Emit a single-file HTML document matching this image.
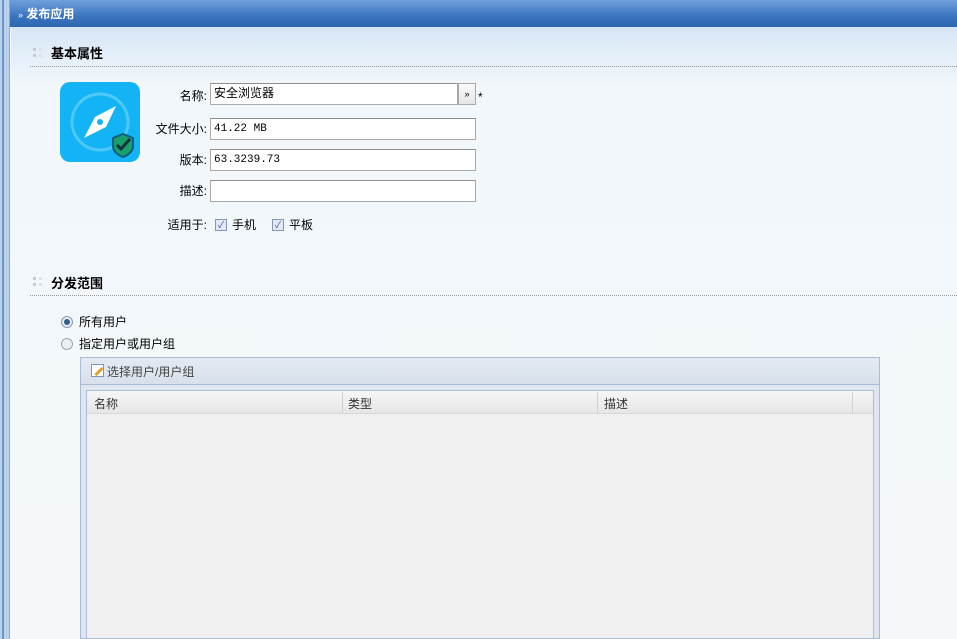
<!DOCTYPE html>
<html><head><meta charset="utf-8"><style>
*{margin:0;padding:0;box-sizing:border-box}
body{width:957px;height:639px;overflow:hidden;position:relative;font-family:"Liberation Sans","Noto Sans CJK SC",sans-serif;font-size:12px;line-height:14px;color:#000;background:#f4f8fb}
.abs{position:absolute}
.left{left:0;top:0;width:10px;height:639px;background:#b9d0ec;border-right:1px solid #8aa9d3}
.left:before{content:"";position:absolute;left:2px;top:0;width:2px;height:639px;background:#6f95c8}
.hdr{left:10px;top:0;width:947px;height:27px;background:linear-gradient(#6fa0dc,#3a74c0 60%,#2f66b0);color:#fff;font-weight:bold;font-size:12px;line-height:28px;padding-left:8px}
.main{left:11px;top:27px;width:946px;height:612px;background:linear-gradient(#d6e6f6,#f2f7fb 60px,#f4f8fb)}
.sec{font-weight:bold;font-size:13px;line-height:15px}
.dots{width:10px;height:10px}
.dots i{position:absolute;width:3px;height:3px;background:#c6ccd3}
.line{height:0;border-top:1px dotted #999}
.lbl{text-align:right;width:70px}
.inp{height:22px;border:1px solid #a9a9a9;border-top-color:#8e8e8e;background:#fff;font-size:11px;line-height:14px;padding:3px 3px;font-family:"Liberation Mono","Noto Sans CJK SC",monospace}
.cb{width:12px;height:12px;border:1px solid #8497b5;background:#e3e9f4;font-size:9px;line-height:10px;text-align:center;color:#3356a0}
</style></head><body>
<div class="abs left"></div>
<div class="abs hdr"><span style="font-size:9px;font-weight:normal">»</span> 发布应用</div>
<div class="abs main"></div>

<div class="abs dots" style="left:33px;top:48px"><i style="left:0;top:0"></i><i style="left:6px;top:0;background:#dde2e6"></i><i style="left:0;top:6px"></i><i style="left:6px;top:6px;background:#dde2e6"></i></div>
<div class="abs sec" style="left:51px;top:46px">基本属性</div>
<div class="abs line" style="left:30px;top:66px;width:927px"></div>

<div class="abs" style="left:60px;top:82px;width:80px;height:80px;border-radius:10px;background:#13b4f6">
<svg width="80" height="80" viewBox="0 0 80 80"><circle cx="40" cy="40" r="28" fill="none" stroke="#4fc8f8" stroke-width="3"/><polygon points="56,24 46,45 24,56 35,35" fill="#fff"/><circle cx="40" cy="40" r="3" fill="#13b4f6"/>
<path d="M63 52 l10 4 v8 c0 6 -5 9 -10 11 c-5 -2 -10 -5 -10 -11 v-8z" fill="#1a9f6a" stroke="#0a5f83" stroke-width="2"/><path d="M57 63 l4 4 l9 -10" fill="none" stroke="#183040" stroke-width="3"/></svg></div>

<div class="abs lbl" style="left:137px;top:89px">名称:</div>
<div class="abs inp" style="left:210px;top:83px;width:248px;font-family:'Liberation Sans','Noto Sans CJK SC',sans-serif;font-size:12px;padding-top:2px">安全浏览器</div>
<div class="abs" style="left:458px;top:83px;width:18px;height:22px;border:1px solid #a9a9a9;background:linear-gradient(#fafafa,#e6e6e6);font-size:9px;text-align:center;line-height:20px">»</div>
<div class="abs" style="left:478px;top:90px">*</div>

<div class="abs lbl" style="left:137px;top:122px">文件大小:</div>
<div class="abs inp" style="left:210px;top:118px;width:266px">41.22 MB</div>
<div class="abs lbl" style="left:137px;top:153px">版本:</div>
<div class="abs inp" style="left:210px;top:149px;width:266px">63.3239.73</div>
<div class="abs lbl" style="left:137px;top:184px">描述:</div>
<div class="abs inp" style="left:210px;top:180px;width:266px"></div>
<div class="abs lbl" style="left:137px;top:218px">适用于:</div>
<div class="abs cb" style="left:215px;top:219px">✓</div><div class="abs" style="left:232px;top:218px">手机</div>
<div class="abs cb" style="left:272px;top:219px">✓</div><div class="abs" style="left:289px;top:218px">平板</div>

<div class="abs dots" style="left:33px;top:277px"><i style="left:0;top:0"></i><i style="left:6px;top:0;background:#dde2e6"></i><i style="left:0;top:6px"></i><i style="left:6px;top:6px;background:#dde2e6"></i></div>
<div class="abs sec" style="left:51px;top:276px">分发范围</div>
<div class="abs line" style="left:30px;top:295px;width:927px"></div>

<div class="abs" style="left:61px;top:316px;width:12px;height:12px;border-radius:50%;border:1px solid #8a98a8;background:#e8eef4"><div style="position:absolute;left:2px;top:2px;width:6px;height:6px;border-radius:50%;background:#2a5f8e"></div></div>
<div class="abs" style="left:79px;top:315px">所有用户</div>
<div class="abs" style="left:61px;top:338px;width:12px;height:12px;border-radius:50%;border:1px solid #9aa5b0;background:#eceff2"></div>
<div class="abs" style="left:79px;top:337px">指定用户或用户组</div>

<div class="abs" style="left:80px;top:357px;width:800px;height:282px;border:1px solid #a9bcd4;background:#dfe6f0"></div>
<div class="abs" style="left:81px;top:358px;width:798px;height:27px;background:linear-gradient(#e4eaf2,#d7e0eb);border-bottom:1px solid #a9bcd4"></div>
<div class="abs" style="left:91px;top:364px;width:13px;height:13px;border:1px solid #7a96b8;background:#fff"><div style="position:absolute;left:2px;top:5px;width:10px;height:3px;background:#e0a030;transform:rotate(-45deg)"></div></div>
<div class="abs" style="left:107px;top:365px;color:#444">选择用户/用户组</div>
<div class="abs" style="left:86px;top:390px;width:788px;height:249px;border:1px solid #a9bcd4;background:#f0f0f0"></div>
<div class="abs" style="left:87px;top:391px;width:786px;height:23px;background:linear-gradient(#f6f6f6,#e6e6e6);border-bottom:1px solid #d8d8d8"></div>
<div class="abs" style="left:342px;top:392px;width:1px;height:21px;background:#d0d0d0"></div>
<div class="abs" style="left:597px;top:392px;width:1px;height:21px;background:#d0d0d0"></div>
<div class="abs" style="left:852px;top:392px;width:1px;height:21px;background:#d0d0d0"></div>
<div class="abs" style="left:94px;top:397px;color:#333">名称</div>
<div class="abs" style="left:348px;top:397px;color:#333">类型</div>
<div class="abs" style="left:604px;top:397px;color:#333">描述</div>
</body></html>
